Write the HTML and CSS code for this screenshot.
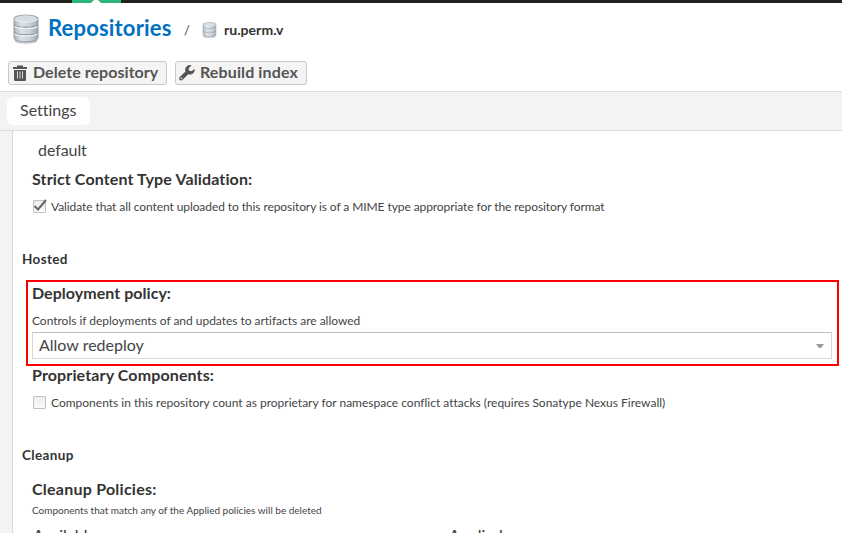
FILE: index.html
```html
<!DOCTYPE html>
<html lang="en">
<head>
<meta charset="utf-8">
<title>Repositories</title>
<link rel="stylesheet" href="styles.css">
</head>
<body>
<svg class="defs" width="0" height="0">
  <defs>
    <linearGradient id="metal"><stop offset="0" stop-color="#aeb4bc"/><stop offset=".3" stop-color="#dce2e9"/><stop offset=".65" stop-color="#cbd1d9"/><stop offset="1" stop-color="#a3a9b2"/></linearGradient>
    <symbol id="database" viewBox="0 0 26 30">
      <ellipse cx="13" cy="27" rx="11.5" ry="2.7" fill="#777" opacity=".4"/>
      <path d="M1 4.5C1 0 25 0 25 4.5V24C25 29 1 29 1 24Z" fill="url(#metal)" stroke="#8b929c" stroke-width=".9"/>
      <path d="M1.5 11C4 14 22 14 24.5 11M1.5 18.5C4 21.5 22 21.5 24.5 18.5" fill="none" stroke="#858c96" stroke-width="1.1"/>
      <path d="M1.7 12.3C4 15.2 22 15.2 24.3 12.3M1.7 19.8C4 22.7 22 22.7 24.3 19.8M1.7 5.3C4 9 22 9 24.3 5.3" fill="none" stroke="#f3f6fa" stroke-width="1.1"/>
      <ellipse cx="13" cy="4.6" rx="11" ry="3" fill="#d7dde4"/>
    </symbol>
  </defs>
</svg>
<div class="topbar"><div class="mode"><i></i></div></div>
<header class="crumbs">
  <svg class="db-large"><use href="#database"/></svg>
  <h1><span>Repositories</span></h1>
  <span class="slash">/</span>
  <svg class="db-small"><use href="#database"/></svg>
  <strong><span>ru.perm.v</span></strong>
</header>
<div class="toolbar">
  <button class="delete"><svg width="14" height="16" viewBox="0 0 14 16"><path d="M0 2H4V.5H10V2H14V4H0ZM1 5H13V14.5Q13 16 11.5 16H2.5Q1 16 1 14.5Z" fill="#555"/><path d="M4.5 6.5V13.5M7 6.5V13.5M9.5 6.5V13.5" stroke="#d6d6d6"/></svg><span>Delete repository</span></button>
  <button class="rebuild"><svg width="16" height="16" viewBox="0 0 16 16"><path d="M15.7 4.1A4.8 4.8 0 0 1 9.3 9.2L3.4 15.1A2 2 0 0 1 .6 12.3L6.5 6.6A4.8 4.8 0 0 1 12.6.4L9.8 3.1V5.6L12.3 6.2Z" fill="#555"/><circle cx="2.5" cy="13.4" r=".8" fill="#eee"/></svg><span>Rebuild index</span></button>
</div>
<nav><div class="tab"><span>Settings</span></div></nav>
<main>
  <form>
    <div class="value"><span>default</span></div>
    <h2 class="strict"><span>Strict Content Type Validation:</span></h2>
    <label class="check"><i class="box"><svg width="16" height="14" viewBox="0 0 16 14"><path d="M2.5 7L6 10.5L14 1" fill="none" stroke="#666" stroke-width="2"/></svg></i><span class="mime">Validate that all content uploaded to this repository is of a MIME type appropriate for the repository format</span></label>
    <h3 class="hosted"><span>Hosted</span></h3>
    <section class="highlight">
      <h2 class="deployment"><span>Deployment policy:</span></h2>
      <p class="help"><span>Controls if deployments of and updates to artifacts are allowed</span></p>
      <div class="select"><span>Allow redeploy</span><svg width="8" height="4" viewBox="0 0 8 4"><path d="M0 0H8L5 4H3Z" fill="#999"/></svg></div>
    </section>
    <h2 class="proprietary"><span>Proprietary Components:</span></h2>
    <label class="check"><i class="box"></i><span class="firewall">Components in this repository count as proprietary for namespace conflict attacks (requires Sonatype Nexus Firewall)</span></label>
    <h3 class="cleanup"><span>Cleanup</span></h3>
    <h2 class="policies"><span>Cleanup Policies:</span></h2>
    <p class="hint"><span>Components that match any of the Applied policies will be deleted</span></p>
    <div class="columns"><span>Available</span><span>Applied</span></div>
  </form>
</main>
</body>
</html>
```
FILE: styles.css
```css
* { box-sizing: border-box; }
body { margin: 0; height: 533px; overflow: hidden; background: #fff; color: #444; font-family: Lato, "Liberation Sans", sans-serif; font-variant-ligatures: none; display: flex; flex-direction: column; white-space: nowrap; }
h1, h2, h3, p { margin: 0; }
i { display: block; }
.defs { position: absolute; }
.topbar { height: 3px; background: #222; flex: none; }
.mode { margin-left: 72px; width: 49px; height: 3px; background: #2db57c; }
.mode i { margin-left: 19px; width: 10px; height: 3px; background: #fff; clip-path: polygon(30% 0, 70% 0, 100% 100%, 0 100%); }
.crumbs { height: 58px; flex: none; display: flex; align-items: flex-start; padding-left: 13px; }
.db-large { width: 26px; height: 30px; margin-top: 11px; }
.db-small { width: 15px; height: 16px; margin: 19px 0 0; }
h1 { width: 136px; margin: 11px 0 0 9px; font-size: 22px; line-height: 28px; letter-spacing: .17px; color: #0070c0; }
.slash { width: 18px; margin-top: 19px; font-size: 13px; line-height: 16px; }
.crumbs strong { margin: 19px 0 0 7px; font-size: 14px; line-height: 16px; letter-spacing: .05px; color: #333; }
.toolbar { height: 30px; flex: none; display: flex; gap: 8px; padding-left: 8px; }
button { height: 24px; display: flex; align-items: center; gap: 6px; padding: 0 0 0 4px; border: 1px solid #c8c8c8; border-radius: 3px; background: #f4f4f4; font: 700 16px/20px Lato, sans-serif; color: #555; }
button span { padding-bottom: 2px; }
button svg { flex: none; }
.delete { width: 159px; letter-spacing: .05px; }
.rebuild { width: 132px; padding-left: 3px; gap: 5px; letter-spacing: .12px; }
nav { height: 40px; flex: none; background: #f3f3f3; border: solid #dcdcdc; border-width: 1px 0; padding: 5px 0 0 7px; }
.tab { width: 83px; height: 28px; border-radius: 6px; background: #fff; padding: 3px 0 0 13px; font-size: 16px; line-height: 20px; }
main { flex: 1; min-height: 0; padding-left: 12px; background: #f3f3f3; }
form { height: 100%; border-left: 1px solid #d9d9d9; background: #fff; padding: 9px 3px 0 9px; overflow: hidden; }
.value { padding-left: 16px; font-size: 16px; line-height: 20px; letter-spacing: -.07px; }
h2 { padding-left: 10px; font-size: 16px; line-height: 20px; color: #333; }
h3 { font-size: 13.5px; line-height: 16px; letter-spacing: .35px; color: #333; }
.strict { margin-top: 9px; letter-spacing: .13px; }
.check { display: flex; margin: 10px 0 0 11px; height: 16px; font-size: 12px; line-height: 16px; }
.mime { letter-spacing: -.083px; }
.box { width: 13px; height: 13px; flex: none; margin: 1px 5px 0 0; border: 1px solid #c2c2c2; border-radius: 1px; background: linear-gradient(#eee, #fafafa); }
.box svg { display: block; margin: -2px 0 0 -2px; }
.hosted { margin-top: 36px; }
.highlight { margin: 13px 0 -1px 4px; width: 813px; height: 86px; border: 2px solid #f00; padding: 1px 5px 0 4px; }
.highlight h2 { padding: 0; letter-spacing: .04px; }
.help { margin-top: 10px; font-size: 12px; line-height: 16px; letter-spacing: -.025px; }
.select { height: 27px; margin-top: 3px; display: flex; justify-content: space-between; align-items: center; padding: 0 7px 0 6px; border: 1px solid #d9d9d9; border-top-color: #bebebe; font-size: 16px; line-height: 20px; }
.select span { padding-bottom: 2px; }
.proprietary { letter-spacing: .13px; }
.cleanup { margin-top: 36px; }
.policies { margin-top: 16px; letter-spacing: .24px; }
.hint { margin: 4px 0 0 10px; font-size: 10px; line-height: 14px; }
.columns { display: grid; grid-template-columns: 416px auto; padding-left: 11px; margin-top: 8px; font-size: 16px; line-height: 20px; color: #333; }
```
